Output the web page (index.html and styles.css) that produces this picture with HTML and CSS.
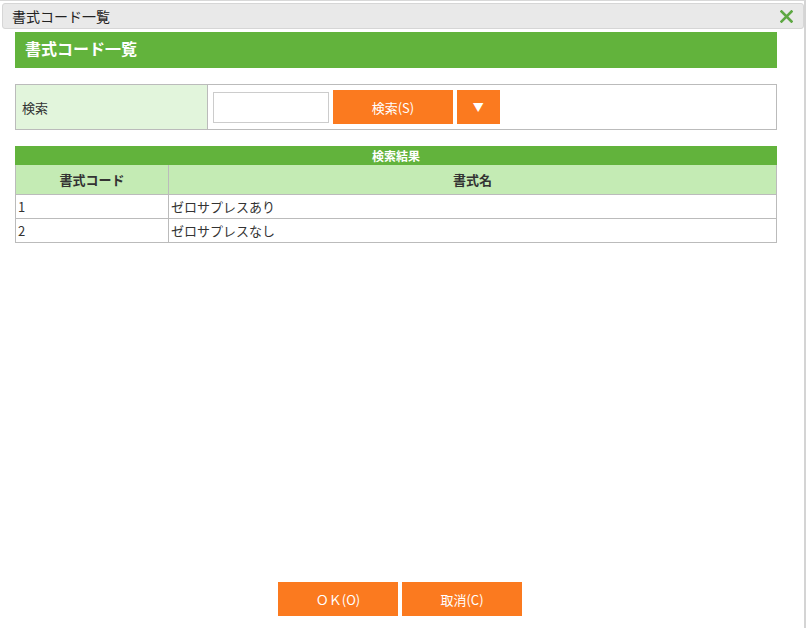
FILE: index.html
```html
<!DOCTYPE html>
<html lang="ja">
<head>
    <meta charset="UTF-8">
    <title>書式コード一覧</title>
    <link rel="stylesheet" href="styles.css">
</head>
<body>
    <div class="dialog">
        <div class="title-bar">
            <span class="title-text">書式コード一覧</span>
            <span class="close-btn">
                <svg width="13" height="13" viewBox="0 0 13 13"><path d="M1.5 1.5 L11.5 11.5 M11.5 1.5 L1.5 11.5" stroke="#5ea843" stroke-width="2.6" stroke-linecap="square"/></svg>
            </span>
        </div>

        <div class="content">
            <div class="page-header">書式コード一覧</div>

            <table class="search-table">
                <tr>
                    <th class="search-label">検索</th>
                    <td class="search-cell">
                        <input type="text" class="search-input">
                        <button class="btn btn-search">検索(S)</button>
                        <button class="btn btn-toggle">▼</button>
                    </td>
                </tr>
            </table>

            <table class="result-table">
                <colgroup>
                    <col class="col-code">
                    <col>
                </colgroup>
                <tr>
                    <th colspan="2" class="result-caption">検索結果</th>
                </tr>
                <tr class="result-head">
                    <th>書式コード</th>
                    <th>書式名</th>
                </tr>
                <tr>
                    <td>1</td>
                    <td>ゼロサプレスあり</td>
                </tr>
                <tr>
                    <td>2</td>
                    <td>ゼロサプレスなし</td>
                </tr>
            </table>
        </div>

        <div class="footer">
            <button class="btn btn-footer">ＯＫ(O)</button>
            <button class="btn btn-footer">取消(C)</button>
        </div>
    </div>
</body>
</html>
```

FILE: styles.css
```css
html, body {
    margin: 0;
    padding: 0;
    background: #fff;
}
body {
    font-family: "Noto Sans CJK JP", "Open Sans", sans-serif;
    font-size: 13px;
    color: #333;
}
.dialog {
    box-sizing: border-box;
    width: 806px;
    height: 628px;
    border-top: 1px solid #d8d8d8;
    border-right: 2px solid #d4d4d4;
    display: flex;
    flex-direction: column;
}
.title-bar {
    box-sizing: border-box;
    height: 26px;
    margin: 2px 0 0 2px;
    background: #e9e9e9;
    border: 1px solid #d6d6d6;
    border-radius: 3px;
    display: flex;
    align-items: center;
    justify-content: space-between;
    padding: 0 10px 0 9px;
}
.title-text {
    font-size: 14px;
    color: #222;
    line-height: 1;
}
.close-btn {
    display: flex;
    margin-top: 1px;
}
.content {
    flex: 1;
    padding: 3px 0 0 15px;
    width: 762px;
}
.page-header {
    height: 36px;
    background: #62b33c;
    color: #fff;
    font-size: 16px;
    font-weight: bold;
    line-height: 32px;
    padding-left: 10px;
    margin-bottom: 16px;
}
table {
    border-collapse: collapse;
    width: 762px;
    table-layout: fixed;
}
.search-table th,
.search-table td {
    border: 1px solid #bbb;
}
.search-label {
    width: 185px;
    height: 44px;
    background: #e2f5dc;
    text-align: left;
    font-weight: normal;
    padding: 0 0 0 6px;
}
.search-cell {
    padding: 0 0 0 5px;
    vertical-align: middle;
}
.search-input {
    box-sizing: border-box;
    width: 116px;
    height: 31px;
    border: 1px solid #ccc;
    margin: 1px 0 0 0;
    padding: 0;
    vertical-align: middle;
}
.btn {
    box-sizing: border-box;
    border: none;
    background: #fb7a1f;
    color: #fff;
    font-family: "Noto Sans CJK JP", "Open Sans", sans-serif;
    font-size: 13px;
    height: 34px;
    padding: 0;
    cursor: pointer;
    vertical-align: middle;
}
.btn-search {
    width: 120px;
    margin-left: 1px;
}
.btn-toggle {
    width: 43px;
    margin-left: 1px;
    font-size: 11px;
}
.result-table {
    margin-top: 16px;
}
.result-table td,
.result-table th {
    border: 1px solid #bbb;
}
.result-caption {
    height: 17px;
    padding: 0;
    background: #62b33c;
    color: #fff;
    font-size: 12px;
    border-color: #62b33c !important;
    line-height: 16px;
}
.result-head th {
    height: 29px;
    padding: 0;
    background: #c4ebb4;
    font-weight: bold;
    color: #333;
    line-height: 20px;
}
.col-code {
    width: 153px;
}
.result-table td {
    height: 23px;
    line-height: 18px;
    padding: 0 0 0 2px;
}
.footer {
    display: flex;
    justify-content: center;
    gap: 4px;
    padding: 0 4px 12px 0;
}
.btn-footer {
    width: 120px;
}
```
